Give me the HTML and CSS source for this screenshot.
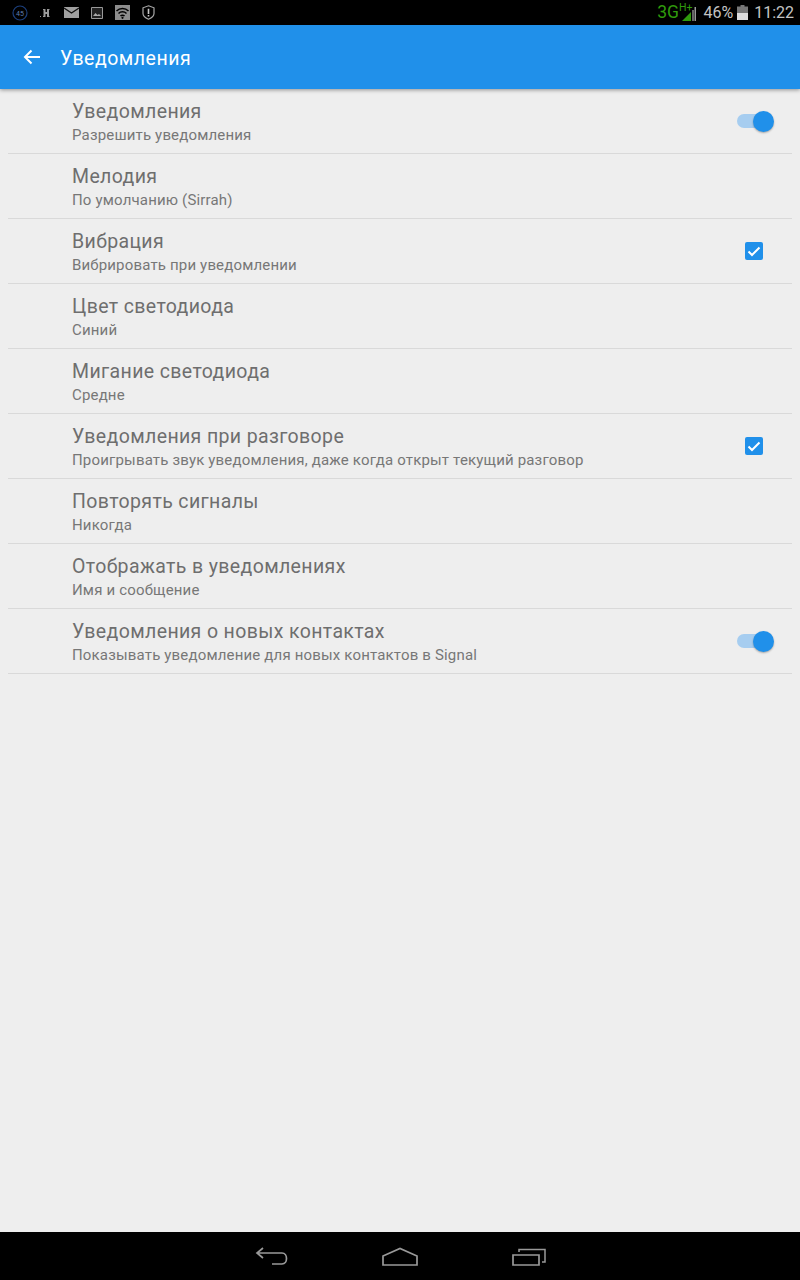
FILE: index.html
```html
<!doctype html>
<html lang="ru">
  <head>
    <meta charset="UTF-8" />
    <meta name="viewport" content="width=device-width, initial-scale=1.0" />
    <title>Уведомления</title>
    <link rel="stylesheet" href="styles.css">
  </head>
  <body>
    <div class="statusbar">
      <div class="status-icons">
        <svg width="16" height="16" viewBox="0 0 16 16"><circle cx="8" cy="8" r="7" fill="none" stroke="#1c3f7c" stroke-width="1.2"/><text x="8" y="10.5" class="badge-text">45</text></svg>
        <svg width="14" height="12" viewBox="0 0 14 12"><path d="M1 9h1v1H1zM4 2h2.500v3h1.500V2h2.500v1H10v6h.5v1H8V7H6.500v3H4V9h.5V3H4z" fill="#9a9a9a"/></svg>
        <svg width="15" height="11" viewBox="0 0 15 11"><path d="M0 0h15v11H0z" fill="#a0a0a0"/><path d="M0 1l7.500 5L15 1" fill="none" stroke="#111" stroke-width="1.300"/></svg>
        <svg class="icon-gap" width="12" height="12" viewBox="0 0 12 12"><path d="M.5.500h11v11H.5z" fill="#222" stroke="#999"/><path d="M2 9l2.500-3 2 2 1.500-1 2 2z" fill="#aaa"/></svg>
        <svg class="icon-gap" width="15" height="15" viewBox="0 0 15 15"><path d="M0 0h15v15H0z" fill="#8c8c8c"/><path d="M1.500 6a8.500 8.500 0 0 1 12 0M3.500 8.500a5.500 5.500 0 0 1 8 0M5.500 11a2.800 2.800 0 0 1 4 0" fill="none" stroke="#000" stroke-width="1.500"/><circle cx="7.500" cy="12.800" r="1.100"/></svg>
        <svg class="icon-gap" width="13" height="15" viewBox="0 0 13 15"><path d="M6.500 .8l5.500 2v5.700c0 2.800-2.800 4.600-5.500 5.700C3.800 13.100 1 11.300 1 8.500V2.800z" fill="none" stroke="#a8a8a8" stroke-width="1.200"/><path d="M5.700 3.800h1.600v5.200H5.700zM5.700 10h1.600v1.400H5.700z" fill="#c8c8c8"/></svg>
      </div>
      <div class="status-right">
        <span class="net">3G<span class="net-type">H+</span></span>
        <svg class="signal" width="15" height="14" viewBox="0 0 15 14"><path d="M0 14l9-9v9z" fill="#2f9a0c"/><path d="M10 3h2v11h-2z" fill="#666"/><path d="M12.500 0h1.500v14h-1.500z" fill="#999"/></svg>
        <span class="battery-pct">46%</span>
        <svg width="11" height="15" viewBox="0 0 11 15"><path d="M3.500 0h4v1.500H11V15H0V1.500h3.500z" fill="#777"/><path d="M0 8h11v7H0z" fill="#ddd"/></svg>
        <span class="clock">11:22</span>
      </div>
    </div>

    <div class="toolbar">
      <svg class="back" width="18" height="16" viewBox="0 0 18 16"><path d="M17 8H2M8.500 1.500L2 8l6.500 6.500" fill="none" stroke="#fff" stroke-width="2"/></svg>
      <div class="toolbar-title">Уведомления</div>
    </div>

    <div class="prefs">
      <div class="pref">
        <div class="pref-text"><div class="pref-title">Уведомления</div><div class="pref-sub">Разрешить уведомления</div></div>
        <div class="switch"><div class="knob"></div></div>
      </div>
      <div class="pref">
        <div class="pref-text"><div class="pref-title">Мелодия</div><div class="pref-sub">По умолчанию (Sirrah)</div></div>
      </div>
      <div class="pref">
        <div class="pref-text"><div class="pref-title">Вибрация</div><div class="pref-sub">Вибрировать при уведомлении</div></div>
        <div class="checkbox"><svg width="18" height="18" viewBox="0 0 18 18"><path d="M3.500 9.500l3.500 3.500 7.500-7.500" fill="none" stroke="#fff" stroke-width="2"/></svg></div>
      </div>
      <div class="pref">
        <div class="pref-text"><div class="pref-title">Цвет светодиода</div><div class="pref-sub">Синий</div></div>
      </div>
      <div class="pref">
        <div class="pref-text"><div class="pref-title">Мигание светодиода</div><div class="pref-sub">Средне</div></div>
      </div>
      <div class="pref">
        <div class="pref-text"><div class="pref-title">Уведомления при разговоре</div><div class="pref-sub">Проигрывать звук уведомления, даже когда открыт текущий разговор</div></div>
        <div class="checkbox"><svg width="18" height="18" viewBox="0 0 18 18"><path d="M3.500 9.500l3.500 3.500 7.500-7.500" fill="none" stroke="#fff" stroke-width="2"/></svg></div>
      </div>
      <div class="pref">
        <div class="pref-text"><div class="pref-title">Повторять сигналы</div><div class="pref-sub">Никогда</div></div>
      </div>
      <div class="pref">
        <div class="pref-text"><div class="pref-title">Отображать в уведомлениях</div><div class="pref-sub">Имя и сообщение</div></div>
      </div>
      <div class="pref">
        <div class="pref-text"><div class="pref-title">Уведомления о новых контактах</div><div class="pref-sub">Показывать уведомление для новых контактов в Signal</div></div>
        <div class="switch"><div class="knob"></div></div>
      </div>
    </div>

    <div class="navbar">
      <svg class="nav-back" width="34" height="20" viewBox="0 0 34 20"><path d="M8 1L2 6l6 5M2 6h25c6 0 6 11 0 11H17" fill="none" stroke="#999" stroke-width="1.700"/></svg>
      <svg width="36" height="20" viewBox="0 0 36 20"><path d="M1 18V9L18 1.500 35 9v9z" fill="none" stroke="#999" stroke-width="1.700"/></svg>
      <svg width="34" height="20" viewBox="0 0 34 20"><path d="M1 8h26v10H1z" fill="none" stroke="#999" stroke-width="1.700"/><path d="M7 5V2.500h26V15h-3" fill="none" stroke="#999" stroke-width="1.500"/></svg>
    </div>
  </body>
</html>
```

FILE: styles.css
```css
body {
  display: flex;
  flex-direction: column;
  height: 1280px;
  margin: 0;
  background: #eeeeee;
  font-family: Roboto, sans-serif;
  overflow: hidden;
}

/* Status bar */
.statusbar {
  display: flex;
  align-items: center;
  justify-content: space-between;
  height: 25px;
  padding: 0 6px 0 12px;
  background: #000;
  flex-shrink: 0;
}
.status-icons {
  display: flex;
  align-items: center;
  gap: 11px;
}
.icon-gap {
  margin-left: 1px;
}
.badge-text {
  font-size: 7px;
  font-family: Roboto, sans-serif;
  fill: #5f7fb0;
  text-anchor: middle;
}
.status-right {
  display: flex;
  align-items: center;
  color: #c4c4c4;
  font-size: 16px;
}
.net {
  display: flex;
  color: #2f9a0c;
  font-size: 17.500px;
  line-height: 25px;
}
.net-type {
  margin-top: -5px;
  font-size: 10.500px;
}
.signal {
  margin: 3px 0 0 -10px;
}
.battery-pct {
  margin: 0 4px 0 6px;
}
.clock {
  margin-left: 6px;
}

/* Toolbar */
.toolbar {
  display: flex;
  align-items: center;
  height: 64px;
  padding-left: 23px;
  background: #2090ea;
  box-shadow: 0 1px 4px rgba(0, 0, 0, 0.4);
  flex-shrink: 0;
  z-index: 1;
}
.toolbar-title {
  margin: 2px 0 0 19px;
  color: #fff;
  font-size: 19.5px;
  letter-spacing: 0.5px;
}

/* List */
.prefs {
  flex: 1;
  padding: 0 8px;
}
.pref {
  display: flex;
  align-items: center;
  justify-content: space-between;
  height: 64px;
  padding: 0 19px 0 64px;
  border-bottom: 1px solid #d9d9d9;
}
.pref-text {
  padding-top: 1px;
}
.pref-title {
  color: #6e6e6e;
  font-size: 19.5px;
  line-height: 24px;
  letter-spacing: 0.37px;
}
.pref-sub {
  margin-top: 2px;
  color: #777;
  font-size: 15px;
  line-height: 18px;
  letter-spacing: 0.17px;
}
.switch {
  position: relative;
  width: 36px;
  height: 14px;
  border-radius: 7px;
  background: #a6cdf0;
}
.knob {
  position: absolute;
  top: -3.500px;
  right: -1px;
  width: 21px;
  height: 21px;
  border-radius: 50%;
  background: #2090ea;
  box-shadow: 0 1px 2px rgba(0, 0, 0, 0.3);
}
.checkbox {
  display: flex;
  align-items: center;
  justify-content: center;
  width: 18px;
  height: 18px;
  margin-right: 10px;
  border-radius: 2px;
  background: #2090ea;
}

/* Nav bar */
.navbar {
  display: flex;
  align-items: center;
  justify-content: center;
  gap: 94px;
  height: 48px;
  padding-top: 2px;
  box-sizing: border-box;
  background: #000;
  flex-shrink: 0;
}
.nav-back {
  margin-left: 1px;
  margin-right: -1px;
}
```
